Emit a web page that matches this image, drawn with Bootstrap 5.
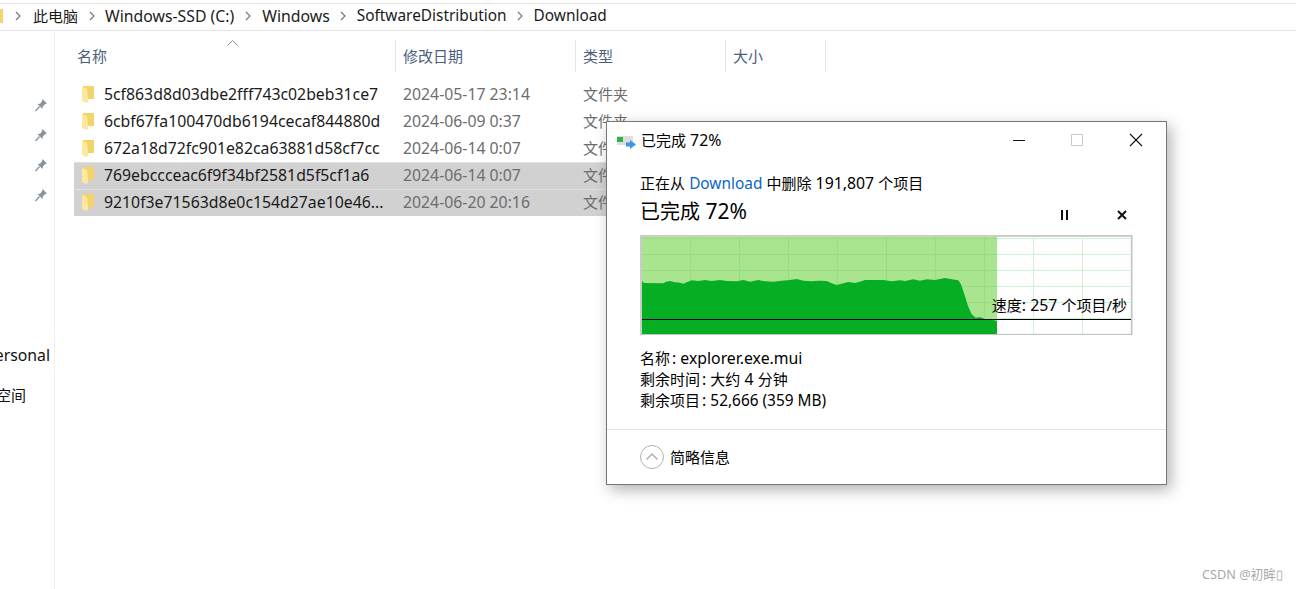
<!DOCTYPE html>
<html lang="zh">
<head>
<meta charset="utf-8">
<title>Download</title>
<link href="https://cdn.jsdelivr.net/npm/bootstrap@5.3.0/dist/css/bootstrap.min.css" rel="stylesheet">
<style>
html,body{height:589px;overflow:hidden;background:#fff}
body{position:relative;font-family:"Noto Sans","Noto Sans CJK SC",sans-serif;font-size:15.8px;color:#1a1a1a;line-height:20px}
.zh{font-size:15px}
.tight{font-size:15.4px}
.addr{height:28px;margin-top:3px;padding-bottom:2px;border-top:1px solid #e4e4e4;border-bottom:1px solid #e4e4e4}
.addr-folder{width:3px;height:14px;background:#f6d36b}
.chev{width:27px;display:flex;justify-content:center}
.chev-first{width:30px}
.chev-wide{width:28px}
.explorer{height:558px}
.side{width:55px;border-right:1px solid #f0f0f0;flex:none;overflow:hidden;color:#111}
.pins{padding-top:67px;padding-left:34px;gap:16px}
.side-label{white-space:nowrap;display:flex;justify-content:flex-end;padding-right:4px}
.side-label-a{margin-top:143px}
.side-label-b{margin-top:20px;padding-right:28px}
.cols{height:32px;margin-top:9px;color:#4d6079;padding-left:22px;position:relative}
.cols span{display:block;flex:none;height:32px;line-height:32px;border-right:1px solid #e5e5e5;padding-left:7px;font-size:15px}
.cols .c1{width:319px;padding-left:0}
.cols .c2{width:180px}
.cols .c3{width:150px}
.cols .c4{width:100px}
.sort{position:absolute;left:172px;top:0;width:11px;height:6px}
.rows{margin-top:9px;margin-left:19px;width:700px}
.frow{height:27px;line-height:27px;white-space:nowrap}
.frow.sel{background:#d1d1d1;border-top:1px solid #e1e1e1;line-height:25px;padding-bottom:2px}
.frow svg{margin-left:8px;margin-right:10px;flex:none}
.fname{width:299px;flex:none;color:#1a1a1a}
.fdate{width:180px;flex:none;color:#6d6d6d}
.ftype{color:#6d6d6d;font-size:15px}
.dlg{position:absolute;left:606px;top:121px;width:561px;height:364px;background:#fff;border:1px solid #777;box-shadow:4px 5px 14px rgba(0,0,0,.3);color:#000}
.dlg-title{height:36px;padding-left:10px}
.dlg-title .ttl{margin-left:4px}
.winbtns{margin-left:auto;padding-right:23px}
.winbtns svg{display:block}
.dlg-body{padding:16px 33px 0}
.big{font-size:21px;line-height:26px;margin-top:4px}
.big .zh{font-size:20px}
.ctl svg{display:block}
.link-blue{color:#0a66c8}
.ctl{gap:46px;padding-right:5px;padding-top:6px}
.chart{position:relative;width:493px;height:100px;margin-top:10px}
.chart svg{display:block}
.speed{position:absolute;right:6px;top:60px;line-height:21px;white-space:nowrap}
.info{margin-top:13px;line-height:21px}
.info .lbl{margin-right:2px}
.dlg-foot{border-top:1px solid #e3e3e3;height:56px;margin-top:18px;padding-left:33px;gap:6px}
.wm{position:absolute;right:13px;bottom:6px;color:#a8a8a8;font-size:12.7px;line-height:18px}
</style>
</head>
<body>
<div class="addr d-flex align-items-center">
  <div class="addr-folder"></div>
  <div class="d-flex align-items-center">
    <span class="chev chev-first"><svg width="6" height="10" viewBox="0 0 6 10"><path d="M1 1l4 4-4 4" fill="none" stroke="#777" stroke-width="1.2"/></svg></span>
    <span class="zh">此电脑</span>
    <span class="chev"><svg width="6" height="10" viewBox="0 0 6 10"><path d="M1 1l4 4-4 4" fill="none" stroke="#777" stroke-width="1.2"/></svg></span>
    <span>Windows-SSD (C:)</span>
    <span class="chev chev-wide"><svg width="6" height="10" viewBox="0 0 6 10"><path d="M1 1l4 4-4 4" fill="none" stroke="#777" stroke-width="1.2"/></svg></span>
    <span>Windows</span>
    <span class="chev"><svg width="6" height="10" viewBox="0 0 6 10"><path d="M1 1l4 4-4 4" fill="none" stroke="#777" stroke-width="1.2"/></svg></span>
    <span class="tight">SoftwareDistribution</span>
    <span class="chev"><svg width="6" height="10" viewBox="0 0 6 10"><path d="M1 1l4 4-4 4" fill="none" stroke="#777" stroke-width="1.2"/></svg></span>
    <span class="tight">Download</span>
  </div>
</div>
<div class="explorer d-flex">
  <div class="side">
    <div class="pins d-flex flex-column">
      <svg width="14" height="14" viewBox="0 0 14 14"><path d="M8.500 1l4.500 4.500-1.800.5-2.400 2.400-.3 2.600-5-5 2.600-.3L8 3.300z" fill="#87939c"/><path d="M5.500 8.500L1.500 13" stroke="#87939c" stroke-width="1.300"/></svg>
      <svg width="14" height="14" viewBox="0 0 14 14"><path d="M8.500 1l4.500 4.500-1.800.5-2.400 2.400-.3 2.600-5-5 2.600-.3L8 3.300z" fill="#87939c"/><path d="M5.500 8.500L1.500 13" stroke="#87939c" stroke-width="1.300"/></svg>
      <svg width="14" height="14" viewBox="0 0 14 14"><path d="M8.500 1l4.500 4.500-1.800.5-2.400 2.400-.3 2.600-5-5 2.600-.3L8 3.300z" fill="#87939c"/><path d="M5.500 8.500L1.500 13" stroke="#87939c" stroke-width="1.300"/></svg>
      <svg width="14" height="14" viewBox="0 0 14 14"><path d="M8.500 1l4.500 4.500-1.800.5-2.400 2.400-.3 2.600-5-5 2.600-.3L8 3.300z" fill="#87939c"/><path d="M5.500 8.500L1.500 13" stroke="#87939c" stroke-width="1.300"/></svg>
    </div>
    <div class="side-label side-label-a"><span>Personal</span></div>
    <div class="side-label side-label-b"><span class="zh">空间</span></div>
  </div>
  <div class="flex-grow-1">
    <div class="cols d-flex">
      <svg class="sort" viewBox="0 0 11 6"><path d="M.5 5.500l5-5 5 5" fill="none" stroke="#888"/></svg>
      <span class="c1">名称</span><span class="c2">修改日期</span><span class="c3">类型</span><span class="c4">大小</span>
    </div>
    <div class="rows">
      <div class="frow d-flex align-items-center"><svg width="12" height="17" viewBox="0 0 12 17"><path d="M1 0h11v13H1z" fill="#f4d469"/><path d="M0 1l5 2 1 10v3l-2 1-4-2z" fill="#fde8a2"/></svg><span class="fname">5cf863d8d03dbe2fff743c02beb31ce7</span><span class="fdate">2024-05-17 23:14</span><span class="ftype">文件夹</span></div>
      <div class="frow d-flex align-items-center"><svg width="12" height="17" viewBox="0 0 12 17"><path d="M1 0h11v13H1z" fill="#f4d469"/><path d="M0 1l5 2 1 10v3l-2 1-4-2z" fill="#fde8a2"/></svg><span class="fname">6cbf67fa100470db6194cecaf844880d</span><span class="fdate">2024-06-09 0:37</span><span class="ftype">文件夹</span></div>
      <div class="frow d-flex align-items-center"><svg width="12" height="17" viewBox="0 0 12 17"><path d="M1 0h11v13H1z" fill="#f4d469"/><path d="M0 1l5 2 1 10v3l-2 1-4-2z" fill="#fde8a2"/></svg><span class="fname">672a18d72fc901e82ca63881d58cf7cc</span><span class="fdate">2024-06-14 0:07</span><span class="ftype">文件夹</span></div>
      <div class="frow sel d-flex align-items-center"><svg width="12" height="17" viewBox="0 0 12 17"><path d="M1 0h11v13H1z" fill="#f4d469"/><path d="M0 1l5 2 1 10v3l-2 1-4-2z" fill="#fde8a2"/></svg><span class="fname">769ebccceac6f9f34bf2581d5f5cf1a6</span><span class="fdate">2024-06-14 0:07</span><span class="ftype">文件夹</span></div>
      <div class="frow sel d-flex align-items-center"><svg width="12" height="17" viewBox="0 0 12 17"><path d="M1 0h11v13H1z" fill="#f4d469"/><path d="M0 1l5 2 1 10v3l-2 1-4-2z" fill="#fde8a2"/></svg><span class="fname">9210f3e71563d8e0c154d27ae10e46...</span><span class="fdate">2024-06-20 20:16</span><span class="ftype">文件夹</span></div>
    </div>
  </div>
</div>

<div class="dlg d-flex flex-column">
  <div class="dlg-title d-flex align-items-center">
    <svg width="20" height="18" viewBox="0 0 20 18"><path d="M0 5h16v9H0z" fill="#dedede"/><path d="M0 6h6v5H0z" fill="#2fb14a"/><path d="M9 11.500h4V9l6 4.500-6 4.500v-2.500H9z" fill="#3c96e6"/></svg>
    <span class="ttl"><span class="zh">已完成</span> 72%</span>
    <div class="winbtns d-flex align-items-center" style="gap:44px">
      <svg width="16" height="12" viewBox="0 0 16 12"><path d="M2 6.500h12" stroke="#111"/></svg>
      <svg width="12" height="12" viewBox="0 0 12 12"><path d="M.5.500h11v11H.5z" fill="none" stroke="#c8c8c8"/></svg>
      <svg width="14" height="14" viewBox="0 0 14 14" style="margin-left:2px"><path d="M1 1l12 12M13 1L1 13" stroke="#111" stroke-width="1.100"/></svg>
    </div>
  </div>
  <div class="dlg-body">
    <div><span class="zh">正在从</span> <span class="link-blue tight">Download</span> <span class="zh">中删除</span> 191,807 <span class="zh">个项目</span></div>
    <div class="d-flex justify-content-between align-items-center big">
      <span><span class="zh">已完成</span> 72%</span>
      <div class="ctl d-flex align-items-center">
        <svg width="12" height="12" viewBox="0 0 12 12"><path d="M3 1h2v10H3zM8 1h2v10H8z" fill="#111"/></svg>
        <svg width="12" height="12" viewBox="0 0 12 12"><path d="M2 2l8 8M10 2l-8 8" stroke="#111" stroke-width="2"/></svg>
      </div>
    </div>
    <div class="chart">
      <svg width="493" height="100" viewBox="30 27 1479 300">
        <rect x="33" y="30" width="1472" height="296" fill="#fff" stroke="#c2c2c2" stroke-width="5"/>
        <g stroke="#cdf1d3" stroke-width="3" fill="none">
          <path d="M36 37.500H1500M36 85.500H1500M36 133.500H1500M36 181.500H1500M36 229.500H1500M36 277.500H1500"/>
          <path d="M181.500 36V324M328.500 36V324M475.500 36V324M622.500 36V324M769.500 36V324M916.500 36V324M1063.500 36V324M1210.500 36V324M1357.500 36V324"/>
        </g>
        <rect x="36" y="33" width="1065" height="291" fill="#a9e58f"/>
        <g stroke="#93df7e" stroke-width="3" fill="none">
          <path d="M36 37.500H1101M36 85.500H1101M36 133.500H1101M36 181.500H1101M36 229.500H1101"/>
          <path d="M181.500 33V324M328.500 33V324M475.500 33V324M622.500 33V324M769.500 33V324M916.500 33V324M1063.500 33V324"/>
        </g>
        <path d="M36 165L42 171L100 172L108 167L120 165L135 169L150 170L160 173L172 168L185 163L205 165L225 162L245 165L270 162L290 165L320 166L340 162L360 167L385 162L405 166L430 167L455 164L480 162L500 159L520 164L545 166L565 164L590 165L605 172L620 177L640 172L655 168L675 171L695 166L705 162L760 162L785 166L810 163L825 165L850 160L870 164L890 160L915 162L945 156L965 160L985 163L993 175L1003 205L1014 240L1025 265L1037 275L1050 273L1065 279L1085 281L1101 285V324H36Z" fill="#06ae24"/>
        <path d="M36 280.500H1503" stroke="#000" stroke-width="3"/>
      </svg>
      <div class="speed"><span class="zh">速度</span>: 257 <span class="zh">个项目/秒</span></div>
    </div>
    <div class="info">
      <div><span class="zh lbl">名称</span>: explorer.exe.mui</div>
      <div><span class="zh lbl">剩余时间</span>: <span class="zh">大约</span> 4 <span class="zh">分钟</span></div>
      <div><span class="zh lbl">剩余项目</span>: <span class="tight">52,666 (359 MB)</span></div>
    </div>
  </div>
  <div class="dlg-foot d-flex align-items-center">
    <svg width="24" height="24" viewBox="0 0 24 24"><circle cx="12" cy="12" r="11.500" fill="#fff" stroke="#b0b0b0"/><path d="M6.500 14.500L12 9l5.500 5.500" fill="none" stroke="#b0b0b0" stroke-width="1.500"/></svg>
    <span class="zh">简略信息</span>
  </div>
</div>
<div class="wm">CSDN @初眸▯</div>
</body>
</html>
